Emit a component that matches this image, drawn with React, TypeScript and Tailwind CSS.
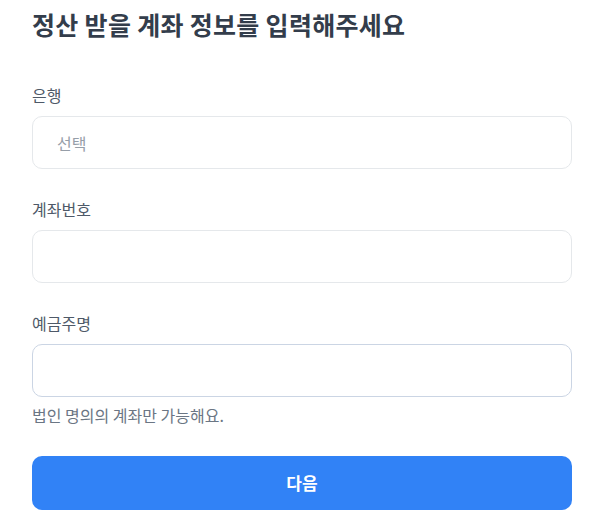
import React, { useState } from 'react';

const font = { fontFamily: '"Noto Sans CJK KR", "Noto Sans", sans-serif' };

const Field: React.FC<{ label: string; children: React.ReactNode; className?: string }> = ({ label, children, className }) => (
    <div className={className}>
        <label className="block text-[16px] leading-[22px] text-[#4e5968]">{label}</label>
        <div className="mt-[10px]">{children}</div>
    </div>
);

const App: React.FC = () => {
    const [account, setAccount] = useState('');
    const [holder, setHolder] = useState('');

    return (
        <div className="min-h-screen bg-white" style={font}>
            <div className="w-[540px] ml-8 pt-2">
                <h1 className="text-[25px] leading-8 font-bold text-[#333d4b] tracking-[0.3px]">
                    정산 받을 계좌 정보를 입력해주세요
                </h1>

                <Field label="은행" className="mt-[44px]">
                    <button
                        type="button"
                        className="w-full h-[53px] px-6 flex items-center text-left text-[16px] text-[#969ea8] border border-[#e5e8eb] rounded-[10px] bg-white"
                    >
                        선택
                    </button>
                </Field>

                <Field label="계좌번호" className="mt-[29px]">
                    <input
                        type="text"
                        value={account}
                        onChange={(e) => setAccount(e.target.value)}
                        className="w-full h-[53px] px-6 text-[16px] text-[#333d4b] border border-[#e5e8eb] rounded-[10px] outline-none"
                    />
                </Field>

                <Field label="예금주명" className="mt-[29px]">
                    <input
                        type="text"
                        value={holder}
                        onChange={(e) => setHolder(e.target.value)}
                        className="w-full h-[53px] px-6 text-[16px] text-[#333d4b] border-[1.5px] border-[#cbd5e4] rounded-[10px] outline-none"
                    />
                </Field>

                <p className="mt-[7px] text-[16px] leading-[22px] text-[#6b7684]">법인 명의의 계좌만 가능해요.</p>

                <button
                    type="button"
                    className="mt-[30px] w-full h-[54px] rounded-[10px] bg-[#3182f6] text-white text-[17px] font-semibold"
                >
                    다음
                </button>
            </div>
        </div>
    );
};

export default App;
